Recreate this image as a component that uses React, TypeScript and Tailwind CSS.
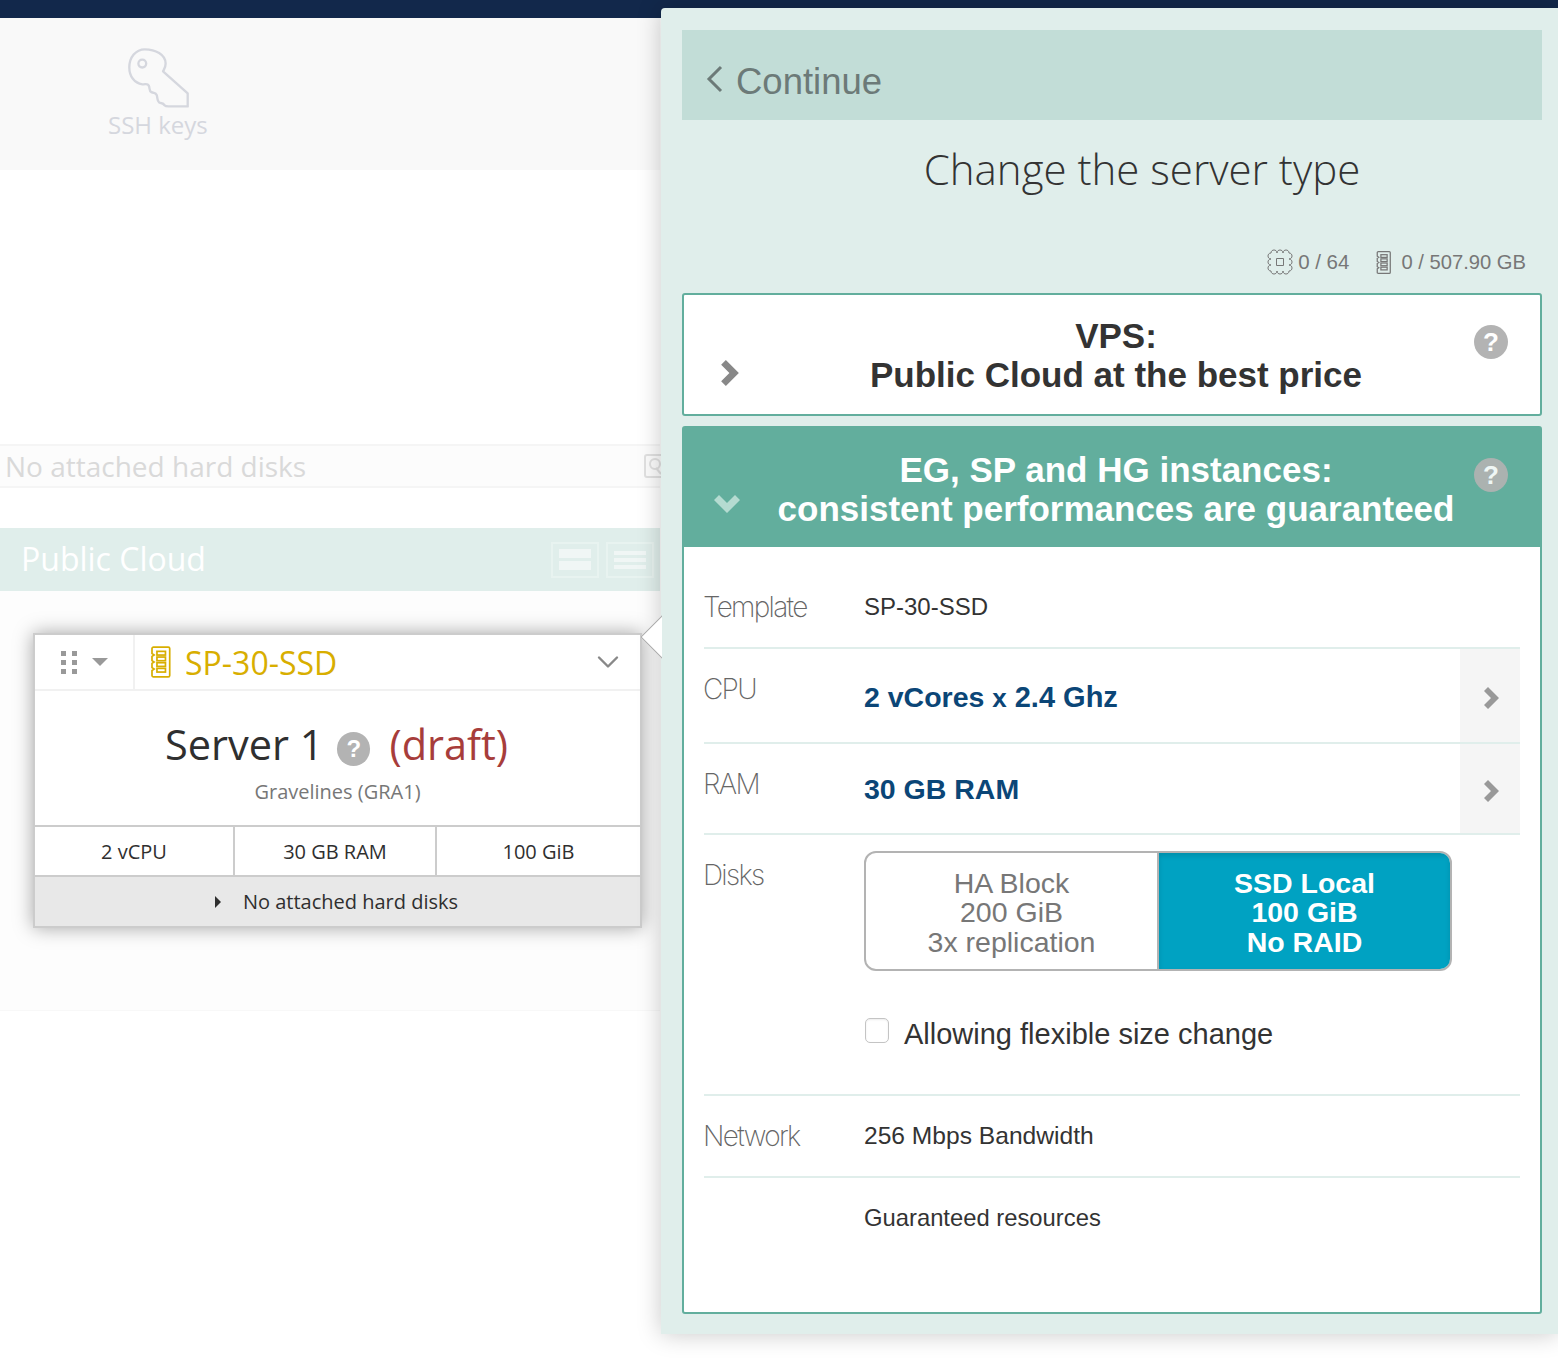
import { ChevronDown } from "lucide-react";

const openSans = "font-['Open_Sans',sans-serif]";
const helvetica = "font-['Liberation_Sans',Arial,sans-serif]";
const rowLabel = "w-[161px] shrink-0 -ml-px font-['Inter',sans-serif] text-[28px] leading-8 font-extralight tracking-[-1.7px] text-[#666]";

function RamIcon({ className }: { className?: string }) {
  return (
    <svg viewBox="0 0 16 24" fill="none" stroke="currentColor" strokeWidth="1.2" className={className}>
      <path d="M3 1.500h10.500a1 1 0 0 1 1 1v19a1 1 0 0 1-1 1H3a1 1 0 0 1-1-1V18l1.500-1-1.500-1v-3l1.500-1-1.500-1V8l1.500-1-1.500-1V2.500a1 1 0 0 1 1-1z" />
      <rect x="5.500" y="4.500" width="6" height="2.600" />
      <rect x="5.500" y="8.500" width="6" height="2.600" />
      <rect x="5.500" y="12.500" width="6" height="2.600" />
      <rect x="5.500" y="16.500" width="6" height="2.600" />
    </svg>
  );
}

function CpuIcon({ className }: { className?: string }) {
  return (
    <svg viewBox="2 2 26 26" fill="none" stroke="currentColor" strokeWidth="1" strokeLinejoin="round" className={className}>
      <path d="M6 6c0-4 6-4 6 0c0-4 6-4 6 0c0-4 6-4 6 0c4 0 4 6 0 6c4 0 4 6 0 6c4 0 4 6 0 6c0 4-6 4-6 0c0 4-6 4-6 0c0 4-6 4-6 0c-4 0-4-6 0-6c-4 0-4-6 0-6c-4 0-4-6 0-6z" />
      <rect x="11.500" y="11.500" width="7" height="7" />
    </svg>
  );
}

function KeyIcon() {
  return (
    <svg viewBox="2 1 47 47" fill="none" stroke="#d5d7de" strokeWidth="1.800" strokeLinejoin="round" className="h-[61px] w-[61px]">
      <path d="M15 2c-7 0-12 6-12 14 0 7 4 12 10 13 3 0 4-1 5 1 1 2 0 4 2 5 2 1 3 0 4 2 1 2 0 4 2 6 2 1 3 0 4 2 1 1 2 1 3 1h15v-10L29 19c1-2 2-3 2-6 0-7-8-11-16-11z" />
      <circle cx="13" cy="13" r="3" />
    </svg>
  );
}

function DiskIcon() {
  return (
    <svg viewBox="0 0 18 24" fill="none" stroke="#e1e1e1" strokeWidth="2" className="-mr-[2px] h-6 w-[18px] shrink-0">
      <path d="M18 1H3a2 2 0 0 0-2 2v18a2 2 0 0 0 2 2h15" />
      <circle cx="11" cy="10" r="5" />
      <path d="M12 14l5 6" />
    </svg>
  );
}

function ThickChevronRight({ className }: { className?: string }) {
  return (
    <svg viewBox="0 0 15 22" fill="currentColor" className={className}>
      <path d="M0 4l4-4 11 11-11 11-4-4 7-7z" />
    </svg>
  );
}

function ThickChevronDown({ className }: { className?: string }) {
  return (
    <svg viewBox="0 0 26 18" fill="currentColor" className={className}>
      <path d="M0 5l5-5 8 8 8-8 5 5-13 13z" />
    </svg>
  );
}

function Help({ className }: { className: string }) {
  return (
    <span className={`flex items-center justify-center rounded-full bg-[#b3b3b3] font-bold text-white ${helvetica} ${className}`}>
      ?
    </span>
  );
}

function ArrowCell() {
  return (
    <div className="flex w-[60px] items-center justify-center bg-[#f5f5f5] pt-[5px] pl-[2px]">
      <ThickChevronRight className="h-[22px] w-[15px] text-[#999]" />
    </div>
  );
}

export default function App() {
  return (
    <div className={`relative h-[1358px] w-[1558px] overflow-hidden bg-white ${openSans}`}>
      <div className="h-[18px] bg-[#12284b]" />

      <div className="flex h-[152px] w-[660px] flex-col bg-[#f9f9f9] pt-[30px] pl-[108px]">
        <div className="h-[62px] pl-5">
          <KeyIcon />
        </div>
        <div className="-mt-[1px] text-2xl leading-8 text-[#d5d7de]">SSH keys</div>
      </div>

      <div className="w-[660px] pt-[274px]">
        <div className="flex h-11 items-center justify-between border-y-2 border-[#f5f5f5] bg-[#fcfcfc] pl-[5px]">
          <span className="text-[28px] text-[#d9d9d9]">No attached hard disks</span>
          <DiskIcon />
        </div>

        <div className="mt-10 flex h-[63px] items-center justify-between bg-[#e0eeeb] pr-[6px] pl-[21px]">
          <span className="-mt-[2px] text-[32px] text-white">Public Cloud</span>
          <div className="flex gap-[7px]">
            <div className="flex h-[36px] w-[48px] flex-col justify-center gap-[3px] border-2 border-[#e8f3f0] px-[6px]">
              <span className="h-[9px] bg-[#f0f6f5]" />
              <span className="h-[9px] bg-[#f0f6f5]" />
            </div>
            <div className="flex h-[36px] w-[48px] flex-col justify-center gap-[3px] border-2 border-[#e8f3f0] px-[6px]">
              <span className="h-[4px] bg-[#f0f6f5]" />
              <span className="h-[4px] bg-[#f0f6f5]" />
              <span className="h-[4px] bg-[#f0f6f5]" />
            </div>
          </div>
        </div>

        <div className="h-[420px] border-b border-[#f8f8f8] bg-[#fdfdfd] pt-[42px] pl-[33px]">
          <div className="w-[609px] border-2 border-[#cccccc] bg-white shadow-[0_0_18px_rgba(0,0,0,0.35)]">
            <div className="flex h-[56px] items-center border-b-2 border-[#f1f1f1]">
              <div className="flex h-full w-[100px] items-center justify-center gap-[15px] border-r-2 border-[#f1f1f1]">
                <div className="grid grid-cols-2 gap-x-[6px] gap-y-[4px]">
                  {[0, 1, 2, 3, 4, 5].map((dot) => (
                    <span key={dot} className="h-[5px] w-[5px] bg-[#999]" />
                  ))}
                </div>
                <span className="h-0 w-0 border-x-[8px] border-t-[8px] border-x-transparent border-t-[#999]" />
              </div>
              <RamIcon className="ml-[14px] h-[34px] w-[23px] text-[#d8ae00]" />
              <span className="ml-[13px] flex-1 pt-[2px] text-[32px] leading-none text-[#d8ae00]">SP-30-SSD</span>
              <ChevronDown className="mr-[14px] h-9 w-9 text-[#888]" strokeWidth={1.6} />
            </div>
            <div className="flex h-[136px] flex-col items-center border-b-2 border-[#cccccc] pt-6">
              <div className="flex h-[60px] items-center pr-[2px] text-[41.5px] leading-none">
                <span className="text-[#2f2f2f]">Server 1</span>
                <Help className="mt-[7px] mr-[19px] ml-[14px] h-[34px] w-[33px] text-[24px]" />
                <span className="text-[#a73d3b]">(draft)</span>
              </div>
              <div className="mt-[3px] text-xl text-[#777]">Gravelines (GRA1)</div>
            </div>
            <div className="flex h-[50px] items-center border-b-2 border-[#cccccc] text-xl text-[#2f2f2f]">
              <div className="flex h-full w-[200px] items-center justify-center border-r-2 border-[#cccccc] pt-[1px]">2 vCPU</div>
              <div className="flex h-full w-[202px] items-center justify-center border-r-2 border-[#cccccc] pt-[1px]">30 GB RAM</div>
              <div className="flex-1 pt-[1px] text-center">100 GiB</div>
            </div>
            <div className="flex h-[49px] items-center justify-center gap-[22px] bg-[#e8e8e8] pr-[2px] text-xl text-[#2f2f2f]">
              <span className="h-0 w-0 border-y-[6px] border-l-[6px] border-y-transparent border-l-[#2f2f2f]" />
              <span>No attached hard disks</span>
            </div>
          </div>
        </div>
      </div>

      {/* panneau latéral par-dessus la page */}
      <div className="absolute top-2 left-[661px] flex h-[1326px] w-[897px] flex-col rounded-tl-sm bg-[#e0eeeb] pt-[22px] pr-4 pl-[21px] shadow-[0_0_24px_rgba(0,0,0,0.22)]">
        <div className="absolute top-[606px] -left-[21px] h-[46px] w-[22px] overflow-hidden">
          <div className="absolute top-[7px] left-[7px] h-8 w-8 rotate-45 border border-[#aaa] bg-white" />
        </div>

        <div className={`flex h-[90px] items-center bg-[#c2ddd7] pt-[14px] pl-[23px] text-[#6c7a78] ${helvetica}`}>
          <svg viewBox="0 0 18 28" fill="none" stroke="currentColor" strokeWidth="3" className="-mt-[6px] h-[28px] w-[18px]">
            <path d="M16 2L4 14l12 12" />
          </svg>
          <span className="ml-[13px] text-[36.5px] leading-none">Continue</span>
        </div>

        <h1 className="mt-[21px] h-[56px] pl-[60px] text-center text-[42px] leading-[56px] font-light text-[#333]">
          Change the server type
        </h1>

        <div className={`mt-[47px] flex h-[36px] items-center justify-end pr-4 text-[20.5px] text-[#777] ${helvetica}`}>
          <CpuIcon className="h-[26px] w-[26px]" />
          <span className="ml-[5px]">0 / 64</span>
          <RamIcon className="ml-[26px] h-[25px] w-[17px]" />
          <span className="ml-[9px] text-[20.2px]">0 / 507.90 GB</span>
        </div>

        <div className={`relative mt-[13px] flex h-[123px] flex-col items-center justify-center rounded-[3px] border-2 border-[#62ae9d] bg-white pt-[1px] pl-2 text-[35px] leading-[39px] font-bold text-[#333] ${helvetica}`}>
          <ThickChevronRight className="absolute top-[65px] left-[37px] h-[26px] w-[18px] text-[#888]" />
          <Help className="absolute top-[30px] right-[32px] h-[34px] w-[34px] text-[26px]" />
          <span>VPS:</span>
          <span>Public Cloud at the best price</span>
        </div>

        <div className={`mt-[10px] flex h-[888px] flex-col rounded-[3px] border-2 border-[#62ae9d] bg-white ${helvetica}`}>
          <div className="relative -mt-px flex h-[120px] flex-col items-center justify-center bg-[#62ae9d] pt-[4px] pl-2 text-[35px] leading-[39px] font-bold text-white">
            <ThickChevronDown className="absolute top-[68px] left-[30px] h-[18px] w-[26px] text-[#b5dbd1]" />
            <Help className="absolute top-[31px] right-[32px] h-[34px] w-[34px] text-[26px] opacity-90" />
            <span>EG, SP and HG instances:</span>
            <span>consistent performances are guaranteed</span>
          </div>

          <div className="flex flex-col px-5">
            <div className="flex h-[102px] items-start border-b-2 border-[#e0eeeb] pt-11">
              <div className={rowLabel}>Template</div>
              <div className="text-2xl leading-8 text-[#333]">SP-30-SSD</div>
            </div>
            <div className="flex h-[95px] border-b-2 border-[#e0eeeb]">
              <div className={`${rowLabel} pt-[24px]`}>CPU</div>
              <div className="flex-1 pt-[32px] text-[28.5px] leading-8 font-bold text-[#0b4677]">
                2 vCores <span className="text-[26px]">x</span> <span className="text-[29px]">2.4 Ghz</span>
              </div>
              <ArrowCell />
            </div>
            <div className="flex h-[91px] border-b-2 border-[#e0eeeb]">
              <div className={`${rowLabel} pt-[24px]`}>RAM</div>
              <div className="flex-1 pt-[29px] text-[28.5px] leading-8 font-bold text-[#0b4677]">30 GB RAM</div>
              <ArrowCell />
            </div>
            <div className="flex h-[261px] border-b-2 border-[#e0eeeb] pt-[24px]">
              <div className={rowLabel}>Disks</div>
              <div>
                <div className="-mt-[8px] flex h-[120px] w-[588px] overflow-hidden rounded-xl border-2 border-[#b3b3b3] text-center text-[28.5px] leading-[29.5px]">
                  <div className="flex flex-1 flex-col justify-center border-r-2 border-[#b3b3b3] pt-[4px] text-[#777]">
                    <span>HA Block</span>
                    <span>200 GiB</span>
                    <span>3x replication</span>
                  </div>
                  <div className="flex w-[291px] flex-col justify-center bg-[#00a2c2] pt-[4px] font-bold text-white shadow-[inset_0_3px_5px_rgba(0,0,0,0.12)]">
                    <span>SSD Local</span>
                    <span>100 GiB</span>
                    <span>No RAID</span>
                  </div>
                </div>
                <div className="mt-[47px] flex items-start">
                  <span className="mt-[0px] ml-px h-[25px] w-6 rounded-[5px] border border-[#c4c4c4] bg-white shadow-[inset_0_1px_2px_rgba(0,0,0,0.08)]" />
                  <span className="ml-[15px] text-[29px] leading-8 text-[#333]">Allowing flexible size change</span>
                </div>
              </div>
            </div>
            <div className="flex h-[82px] items-start border-b-2 border-[#e0eeeb] pt-[24px]">
              <div className={rowLabel}>Network</div>
              <div className="text-[24.6px] leading-8 text-[#333]">256 Mbps Bandwidth</div>
            </div>
            <div className="pt-[24px] pl-40 text-[23.8px] leading-8 text-[#333]">Guaranteed resources</div>
          </div>
        </div>
      </div>
    </div>
  );
}
